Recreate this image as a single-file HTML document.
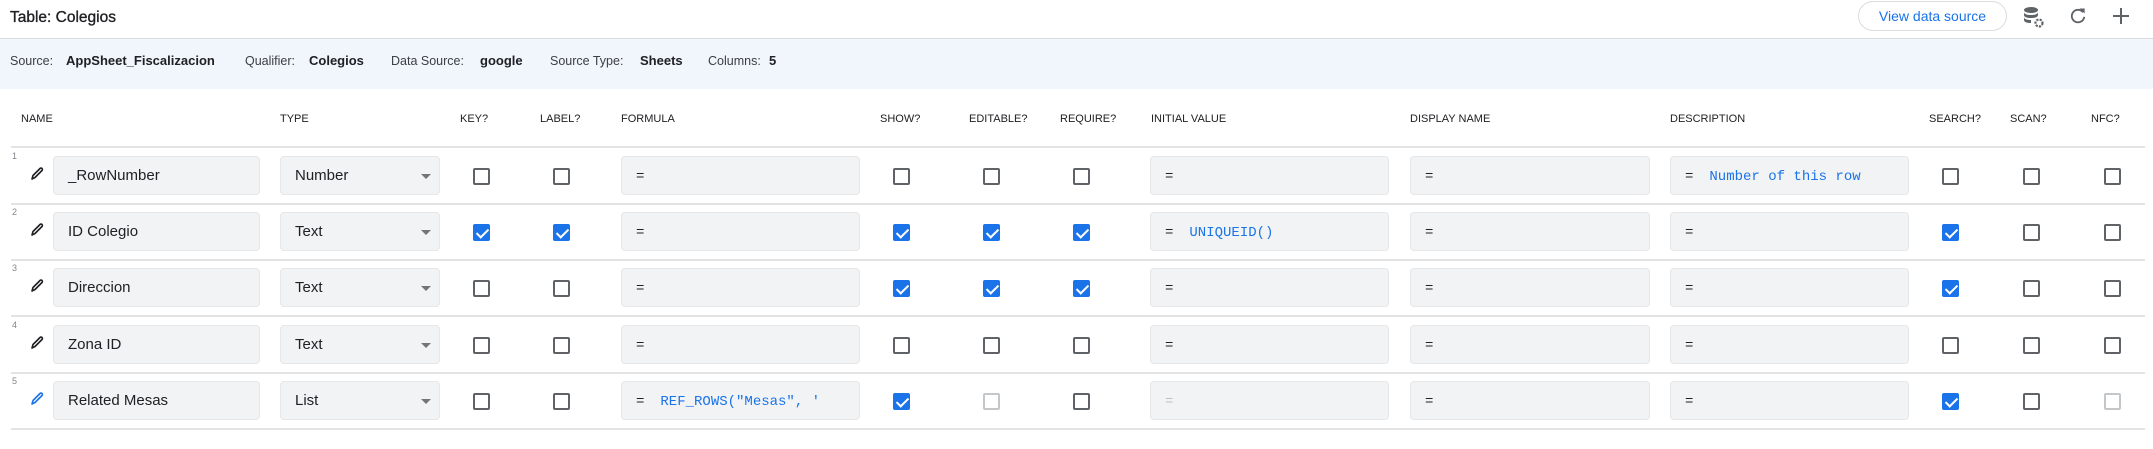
<!DOCTYPE html>
<html><head><meta charset="utf-8"><style>
*{margin:0;padding:0;box-sizing:border-box}
body{width:2153px;height:449px;background:#fff;font-family:"Liberation Sans",Arial,sans-serif;color:#202124;position:relative;overflow:hidden}
.a{position:absolute;white-space:nowrap}
.title{left:10px;top:7px;font-size:15.5px;line-height:22px;-webkit-text-stroke:0.35px #202124}
.band{position:absolute;left:0;top:38px;width:2153px;height:51px;background:#f1f5fc;border-top:1px solid #dadce0}
.info{top:52px;font-size:12.5px;line-height:18px;color:#3c4043}
.v{top:52px;font-size:13px;line-height:18px;color:#202124;font-weight:bold}
.hd{top:112px;font-size:11px;line-height:14px;color:#202124}
.sep{position:absolute;left:11px;width:2134px;height:2px;background:#e3e3e3}
.box{position:absolute;height:39px;background:#f1f3f4;border:1px solid #e6e7e9;border-radius:4px;font-size:15px;line-height:37px;padding-left:14px}
.eq{font-family:"Liberation Mono",monospace;font-size:14px}
.code{font-family:"Liberation Mono",monospace;font-size:14px;color:#1a73e8;margin-left:16px}
.cb{position:absolute;width:17px;height:17px;border:2px solid #5f6368;border-radius:2px}
.cb.on{background:#1a73e8;border-color:#1a73e8}
.cb.on:after{content:"";position:absolute;left:4px;top:0px;width:5px;height:10px;border:solid #fff;border-width:0 2px 2px 0;transform:rotate(45deg)}
.cb.dis{border-color:#c4c7ca}
.rn{font-size:9px;color:#80868b;left:12px}
.arrow{position:absolute;right:8px;top:17px;width:0;height:0;border-left:5px solid transparent;border-right:5px solid transparent;border-top:5px solid #757575}
</style></head><body>
<div class="a title">Table: Colegios</div>
<div class="a" style="left:1858px;top:1px;width:149px;height:30px;border:1px solid #dadce0;border-radius:15px;color:#1a73e8;font-size:14px;line-height:28px;text-align:center">View data source</div>
<svg class="a" style="left:2022px;top:5px" width="24" height="24" viewBox="0 0 24 24" fill="#5f6368"><ellipse cx="9" cy="5" rx="7" ry="3"/><path d="M2 7c0 2 3 3 7 3s7-1 7-3v3c0 2-3 3-7 3s-7-1-7-3z"/><path d="M2 12c0 2 3 3 7 3v3c-4 0-7-1-7-3z"/><circle cx="17" cy="18" r="3.5" fill="none" stroke="#5f6368" stroke-width="2.2" stroke-dasharray="2.2 1.2"/></svg>
<svg class="a" style="left:2068px;top:6px" width="20" height="20" viewBox="0 0 24 24"><path d="M18 7.5A7.5 7.5 0 1 0 19.5 13" fill="none" stroke="#5f6368" stroke-width="2.2"/><path d="M14 3h6v6z" fill="#5f6368"/></svg>
<svg class="a" style="left:2112px;top:7px" width="18" height="18" viewBox="0 0 18 18"><path d="M9 1v16M1 9h16" stroke="#5f6368" stroke-width="2"/></svg>
<div class="band"></div>
<div class="a info" style="left:10px">Source:</div><div class="a v" style="left:66px">AppSheet_Fiscalizacion</div>
<div class="a info" style="left:245px">Qualifier:</div><div class="a v" style="left:309px">Colegios</div>
<div class="a info" style="left:391px">Data Source:</div><div class="a v" style="left:480px">google</div>
<div class="a info" style="left:550px">Source Type:</div><div class="a v" style="left:640px">Sheets</div>
<div class="a info" style="left:708px">Columns:</div><div class="a v" style="left:769px">5</div>

<div class="a hd" style="left:21px">NAME</div>
<div class="a hd" style="left:280px">TYPE</div>
<div class="a hd" style="left:460px">KEY?</div>
<div class="a hd" style="left:540px">LABEL?</div>
<div class="a hd" style="left:621px">FORMULA</div>
<div class="a hd" style="left:880px">SHOW?</div>
<div class="a hd" style="left:969px">EDITABLE?</div>
<div class="a hd" style="left:1060px">REQUIRE?</div>
<div class="a hd" style="left:1151px">INITIAL VALUE</div>
<div class="a hd" style="left:1410px">DISPLAY NAME</div>
<div class="a hd" style="left:1670px">DESCRIPTION</div>
<div class="a hd" style="left:1929px">SEARCH?</div>
<div class="a hd" style="left:2010px">SCAN?</div>
<div class="a hd" style="left:2091px">NFC?</div>

<div id="rows"></div>
<script>
var rows=[
["_RowNumber","Number",[0,0],"",[0,0,0],"","Number of this row",[0,0,0],0],
["ID Colegio","Text",[1,1],"",[1,1,1],"UNIQUEID()","",[1,0,0],0],
["Direccion","Text",[0,0],"",[1,1,1],"","",[1,0,0],0],
["Zona ID","Text",[0,0],"",[0,0,0],"","",[0,0,0],0],
["Related Mesas","List",[0,0],"REF_ROWS(\"Mesas\", '",[1,2,0],"","",[1,0,2],1]];
var h='<div class="sep" style="top:146px"></div>';
function cb(x,y,v){return '<div class="cb'+(v==1?' on':v==2?' dis':'')+'" style="left:'+(x-8)+'px;top:'+y+'px"></div>';}
function esc(s){return s.replace(/&/g,'&amp;').replace(/</g,'&lt;');}
function f(x,w,t,txt,light){return '<div class="box" style="left:'+x+'px;top:'+t+'px;width:'+w+'px"><span class="eq"'+(light?' style="color:#bdc1c6"':'')+'>=</span>'+(txt?'<span class="code">'+esc(txt)+'</span>':'')+'</div>';}
rows.forEach(function(r,i){
 var top=147+i*56.2, bt=Math.round(top+9), cy=Math.round(top+21);
 h+='<div class="a rn" style="top:'+Math.round(top+4)+'px">'+(i+1)+'</div>';
 var pc=r[8]?'#1a73e8':'#202124';
 h+='<svg class="a" style="left:30px;top:'+(cy-1)+'px" width="14" height="14" viewBox="0 0 14 14"><path d="M2 12l1-3.5 7-7a1.4 1.4 0 0 1 2 2l-7 7z" fill="none" stroke="'+pc+'" stroke-width="1.6" stroke-linejoin="round"/></svg>';
 h+='<div class="box" style="left:53px;top:'+bt+'px;width:207px">'+r[0]+'</div>';
 h+='<div class="box" style="left:280px;top:'+bt+'px;width:160px">'+r[1]+'<div class="arrow"></div></div>';
 h+=cb(481,cy,r[2][0])+cb(561,cy,r[2][1]);
 h+=f(621,239,bt,r[3]);
 h+=cb(901,cy,r[4][0])+cb(991,cy,r[4][1])+cb(1081,cy,r[4][2]);
 h+=f(1150,239,bt,r[5],r[8]);
 h+=f(1410,240,bt,"");
 h+=f(1670,239,bt,r[6]);
 h+=cb(1950,cy,r[7][0])+cb(2031,cy,r[7][1])+cb(2112,cy,r[7][2]);
 h+='<div class="sep" style="top:'+Math.round(top+56)+'px"></div>';
});
document.getElementById('rows').innerHTML=h;
</script>
</body></html>
